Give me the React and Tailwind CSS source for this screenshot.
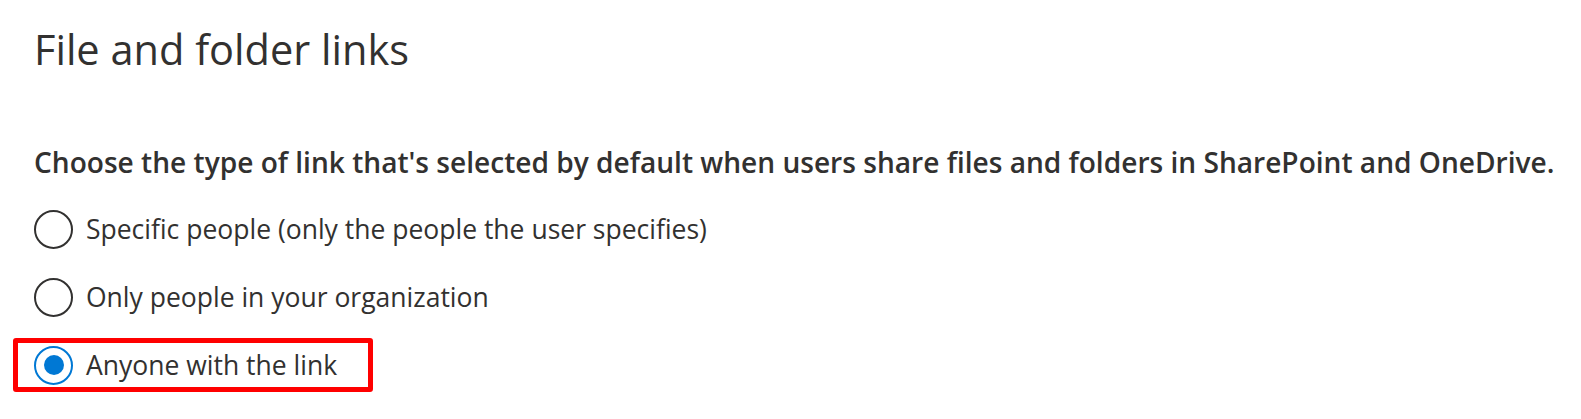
import React from "react";

const options = [
  { label: "Specific people (only the people the user specifies)", checked: false },
  { label: "Only people in your organization", checked: false },
  { label: "Anyone with the link", checked: true },
];

function Radio({ checked }) {
  if (checked) {
    return (
      <span className="flex h-[39px] w-[39px] shrink-0 items-center justify-center rounded-full border-2 border-[#0078d4]">
        <span className="h-[20px] w-[20px] rounded-full bg-[#0078d4]" />
      </span>
    );
  }
  return <span className="h-[39px] w-[39px] shrink-0 rounded-full border-2 border-[#323130]" />;
}

export default function App() {
  return (
    <div className="min-h-[419px] w-[1581px] bg-white pl-[34px] text-[#323130] font-['Open_Sans',sans-serif]">
      <h1 className="pt-[21px] text-[41.5px] leading-[56px] font-normal">File and folder links</h1>
      <p className="mt-[65px] text-[28.1px] leading-[40px] font-semibold">
        Choose the type of link that's selected by default when users share files and folders in SharePoint and OneDrive.
      </p>
      <div className="mt-[23px] flex flex-col gap-[20px]">
        {options.map((o) => (
          <div key={o.label} className="flex w-fit">
            <div
              className={
                o.checked
                  ? "-ml-[21px] -my-[3px] flex items-center gap-[13px] rounded-[3px] border-[5px] border-[#ff0000] pl-[16px] pr-[31px]"
                  : "flex items-center gap-[13px]"
              }
            >
              <Radio checked={o.checked} />
              <span className={o.checked ? "text-[26.5px] leading-[44px]" : "text-[26.5px] leading-[48px]"}>
                {o.label}
              </span>
            </div>
          </div>
        ))}
      </div>
    </div>
  );
}
